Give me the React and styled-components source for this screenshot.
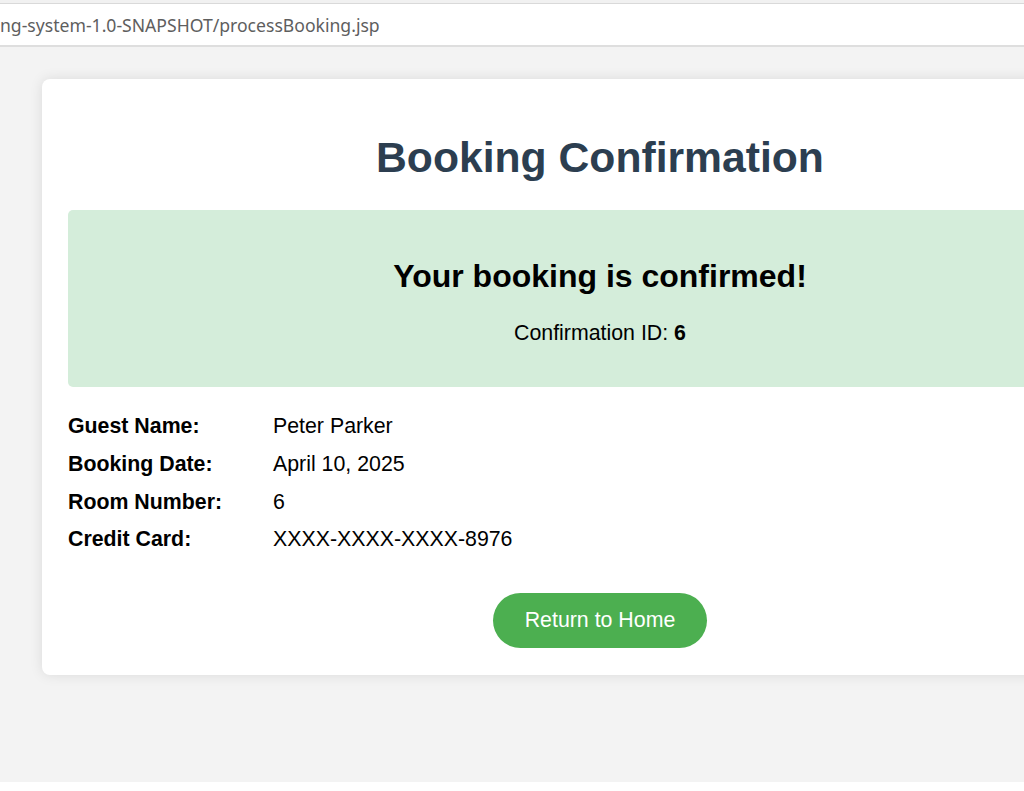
import React from 'react'
import styled, { createGlobalStyle } from 'styled-components'

const GlobalStyle = createGlobalStyle`
  html, body {
    margin: 0;
    padding: 0;
    background: #fff;
  }
  body {
    font-family: "Liberation Sans", Arial, sans-serif;
    overflow: hidden;
  }
`

const Frame = styled.div`
  width: 1024px;
  height: 791px;
  display: flex;
  flex-direction: column;
  overflow: hidden;
  background: #fff;
`

const AddressBar = styled.div`
  height: 47px;
  box-sizing: border-box;
  padding-top: 3px;
  background: #f1f1f1;
`

const AddressField = styled.div`
  height: 44px;
  box-sizing: border-box;
  border-top: 1px solid #d9d9d9;
  border-bottom: 2px solid #dedede;
  background: #fff;
  display: flex;
  align-items: center;
  font-family: "Noto Sans", "Open Sans", sans-serif;
  font-size: 17.6px;
  color: #5e5e5e;
  white-space: nowrap;
`

const Page = styled.div`
  height: 735px;
  box-sizing: border-box;
  padding: 32px 0 0 42px;
  background: #f3f3f3;
  overflow: hidden;
`

const Card = styled.div`
  width: 1116px;
  box-sizing: border-box;
  padding: 26px 26px 27px;
  background: #fff;
  border-radius: 8px;
  box-shadow: 0 0 13px rgba(0, 0, 0, 0.1);
`

const Title = styled.h1`
  margin: 28px 0 0;
  font-size: 42.67px;
  line-height: 49px;
  font-weight: bold;
  text-align: center;
  color: #2c3e50;
`

const SuccessBox = styled.div`
  margin-top: 28px;
  padding: 48px 26px 42px;
  border-radius: 5px;
  background: #d4edda;
  text-align: center;
  color: #000;
`

const SuccessHeading = styled.h2`
  margin: 0;
  font-size: 32px;
  line-height: 37px;
  font-weight: bold;
`

const SuccessText = styled.p`
  margin: 26px 0 0;
  font-size: 21.33px;
  line-height: 24px;
`

const Details = styled.div`
  margin-top: 21px;
  display: grid;
  grid-template-columns: 205px 1fr;
  grid-auto-rows: 37.67px;
  align-items: center;
  font-size: 21.33px;
  color: #000;
`

const Label = styled.div`
  font-weight: bold;
`

const Value = styled.div``

const Actions = styled.div`
  margin-top: 34px;
  display: flex;
  justify-content: center;
`

const HomeButton = styled.a`
  height: 55px;
  padding: 0 32px;
  display: flex;
  align-items: center;
  border-radius: 28px;
  background: #4caf50;
  color: #fff;
  font-size: 21.33px;
  text-decoration: none;
`

const details = [
  ['Guest Name:', 'Peter Parker'],
  ['Booking Date:', 'April 10, 2025'],
  ['Room Number:', '6'],
  ['Credit Card:', 'XXXX-XXXX-XXXX-8976']
]

export default function App() {
  return (
    <Frame>
      <GlobalStyle />
      <AddressBar>
        <AddressField>ng-system-1.0-SNAPSHOT/processBooking.jsp</AddressField>
      </AddressBar>
      <Page>
        <Card>
          <Title>Booking Confirmation</Title>
          <SuccessBox>
            <SuccessHeading>Your booking is confirmed!</SuccessHeading>
            <SuccessText>
              Confirmation ID: <strong>6</strong>
            </SuccessText>
          </SuccessBox>
          <Details>
            {details.map(([label, value]) => (
              <React.Fragment key={label}>
                <Label>{label}</Label>
                <Value>{value}</Value>
              </React.Fragment>
            ))}
          </Details>
          <Actions>
            <HomeButton href="#">Return to Home</HomeButton>
          </Actions>
        </Card>
      </Page>
    </Frame>
  )
}
